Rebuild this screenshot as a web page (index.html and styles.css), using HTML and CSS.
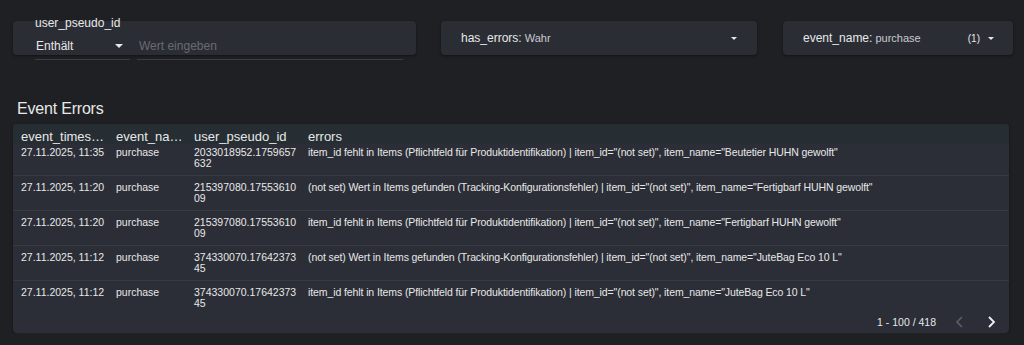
FILE: index.html
```html
<!DOCTYPE html>
<html lang="de">

<head>
    <meta charset="UTF-8">
    <meta name="viewport" content="width=device-width, initial-scale=1.0">
    <title>Event Errors</title>
    <link rel="stylesheet" href="styles.css">
</head>

<body>
    <div class="filters">
        <div class="filter filter-text">
            <div class="filter-label">user_pseudo_id</div>
            <div class="filter-row">
                <div class="select">Enthält <span class="caret big"></span></div>
                <div class="input">Wert eingeben</div>
            </div>
        </div>
        <div class="filter chip chip-errors">
            <span class="chip-key">has_errors:</span>
            <span class="chip-value">Wahr</span>
            <span class="spacer"></span>
            <span class="caret"></span>
        </div>
        <div class="filter chip chip-event">
            <span class="chip-key">event_name:</span>
            <span class="chip-value">purchase</span>
            <span class="spacer"></span>
            <span class="count">(1)</span>
            <span class="caret"></span>
        </div>
    </div>

    <h2 class="title">Event Errors</h2>

    <div class="table-card">
        <table>
            <colgroup>
                <col class="w-time">
                <col class="w-name">
                <col class="w-user">
                <col>
            </colgroup>
            <thead>
                <tr>
                    <th>event_timestamp</th>
                    <th>event_name</th>
                    <th>user_pseudo_id</th>
                    <th>errors</th>
                </tr>
            </thead>
            <tbody>
                <tr>
                    <td>27.11.2025, 11:35</td>
                    <td>purchase</td>
                    <td class="c-user">2033018952.1759657632</td>
                    <td class="c-err">item_id fehlt in Items (Pflichtfeld für Produktidentifikation) | item_id="(not set)", item_name="Beutetier HUHN gewolft"</td>
                </tr>
                <tr>
                    <td>27.11.2025, 11:20</td>
                    <td>purchase</td>
                    <td class="c-user">215397080.1755361009</td>
                    <td class="c-err">(not set) Wert in Items gefunden (Tracking-Konfigurationsfehler) | item_id="(not set)", item_name="Fertigbarf HUHN gewolft"</td>
                </tr>
                <tr>
                    <td>27.11.2025, 11:20</td>
                    <td>purchase</td>
                    <td class="c-user">215397080.1755361009</td>
                    <td class="c-err">item_id fehlt in Items (Pflichtfeld für Produktidentifikation) | item_id="(not set)", item_name="Fertigbarf HUHN gewolft"</td>
                </tr>
                <tr>
                    <td>27.11.2025, 11:12</td>
                    <td>purchase</td>
                    <td class="c-user">374330070.1764237345</td>
                    <td class="c-err">(not set) Wert in Items gefunden (Tracking-Konfigurationsfehler) | item_id="(not set)", item_name="JuteBag Eco 10 L"</td>
                </tr>
                <tr>
                    <td>27.11.2025, 11:12</td>
                    <td>purchase</td>
                    <td class="c-user">374330070.1764237345</td>
                    <td class="c-err">item_id fehlt in Items (Pflichtfeld für Produktidentifikation) | item_id="(not set)", item_name="JuteBag Eco 10 L"</td>
                </tr>
            </tbody>
        </table>
        <div class="pager">
            <span class="pager-text">1 - 100 / 418</span>
            <button class="pager-btn disabled">
                <svg width="8" height="12" viewBox="0 0 8 12"><path d="M7 1 L2 6 L7 11" fill="none" stroke="currentColor" stroke-width="1.6"/></svg>
            </button>
            <button class="pager-btn">
                <svg width="8" height="12" viewBox="0 0 8 12"><path d="M1 1 L6 6 L1 11" fill="none" stroke="currentColor" stroke-width="1.8"/></svg>
            </button>
        </div>
    </div>
</body>

</html>
```

FILE: styles.css
```css
* {
    margin: 0;
    padding: 0;
    box-sizing: border-box;
}

body {
    background-color: #1f2023;
    color: #e8e8e8;
    font-family: "Liberation Sans", Arial, sans-serif;
    padding: 0 11px 0 13px;
}

/* filter bar */
.filters {
    display: flex;
    gap: 25px;
    padding-top: 21px;
}

.filter {
    flex-shrink: 0;
    height: 34px;
    background-color: #2b2d35;
    border-radius: 4px;
    box-shadow: 0 1px 3px rgba(0, 0, 0, 0.45);
}

.filter-text {
    width: 403px;
    padding: 0 13px 0 22px;
}

.filter-label {
    font-size: 12px;
    line-height: 14px;
    margin-top: -5px;
}

.filter-row {
    display: flex;
    gap: 7px;
    margin-top: 6px;
    font-size: 12px;
    line-height: 14px;
}

.select {
    width: 95px;
    display: flex;
    justify-content: space-between;
    align-items: center;
    padding: 3px 7px 6px 1px;
    border-bottom: 1px solid #3a3d44;
}

.input {
    flex: 1;
    color: #686b72;
    padding: 3px 2px 6px;
    border-bottom: 1px solid #3a3d44;
}

.caret {
    width: 0;
    height: 0;
    border-left: 3px solid transparent;
    border-right: 3px solid transparent;
    border-top: 3px solid #e8e8e8;
}

.caret.big {
    border-left-width: 4px;
    border-right-width: 4px;
    border-top-width: 4px;
}

.chip {
    display: flex;
    align-items: center;
    padding: 0 20px;
}

.chip-errors {
    width: 316px;
}

.chip-event {
    width: 230px;
    margin-left: 1px;
    padding-right: 19px;
}

.chip-key {
    font-size: 12px;
    margin-right: 3px;
}

.chip-value {
    font-size: 11px;
    color: #c9cacd;
}

.spacer {
    flex: 1;
}

.count {
    font-size: 10px;
    margin-right: 8px;
}

/* table */
.title {
    font-size: 16px;
    font-weight: normal;
    line-height: 18px;
    letter-spacing: -0.2px;
    margin: 45px 0 6px 4px;
}

.table-card {
    width: 996px;
    height: 209px;
    background-color: #2b2e36;
    border-radius: 4px;
    overflow: hidden;
    box-shadow: 0 1px 3px rgba(0, 0, 0, 0.4);
}

table {
    width: 100%;
    border-collapse: collapse;
    table-layout: fixed;
}

.w-time {
    width: 95px;
}

.w-name {
    width: 78px;
}

.w-user {
    width: 114px;
}

thead {
    background-color: #262e33;
}

th {
    font-size: 13px;
    font-weight: normal;
    line-height: 15px;
    text-align: left;
    padding: 5px 2px 0 8px;
    white-space: nowrap;
    overflow: hidden;
    text-overflow: ellipsis;
}

td {
    font-size: 10.5px;
    line-height: 11px;
    vertical-align: top;
    padding: 6px 2px 6px 8px;
}

td.c-user {
    word-break: break-all;
}

td.c-err {
    letter-spacing: -0.1px;
}

tbody tr {
    border-top: 1px solid #363a41;
}

tbody tr:first-child {
    border-top: none;
}

tbody tr:first-child td {
    padding-top: 3px;
}

.pager {
    display: flex;
    justify-content: flex-end;
    align-items: center;
    height: 18px;
    padding: 0 11px 4px 0;
    font-size: 10.5px;
}

.pager-text {
    margin-right: 17px;
}

.pager-btn {
    background: none;
    border: none;
    color: #f0f0f0;
    width: 12px;
    display: flex;
    justify-content: center;
}

.pager-btn.disabled {
    color: #5b5e65;
    margin-right: 21px;
}
```
